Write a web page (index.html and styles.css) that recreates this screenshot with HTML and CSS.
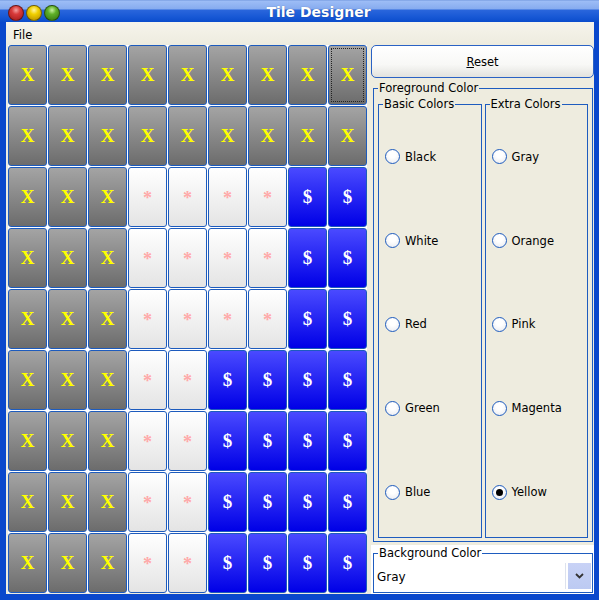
FILE: index.html
```html
<!DOCTYPE html>
<html>
<head>
<meta charset="utf-8">
<title>Tile Designer</title>
<link rel="stylesheet" href="styles.css">
</head>
<body>
<div class="window">
  <div class="titlebar">
    <div class="lights">
      <span class="light red"></span>
      <span class="light yellow"></span>
      <span class="light green"></span>
    </div>
    <div class="title">Tile Designer</div>
  </div>
  <div class="frame">
    <div class="menubar"><span class="menu">File</span></div>
    <div class="content">
      <div class="grid">
        <div class="tile g">X</div><div class="tile g">X</div><div class="tile g">X</div><div class="tile g">X</div><div class="tile g">X</div><div class="tile g">X</div><div class="tile g">X</div><div class="tile g">X</div><div class="tile g focus">X</div>
        <div class="tile g">X</div><div class="tile g">X</div><div class="tile g">X</div><div class="tile g">X</div><div class="tile g">X</div><div class="tile g">X</div><div class="tile g">X</div><div class="tile g">X</div><div class="tile g">X</div>
        <div class="tile g">X</div><div class="tile g">X</div><div class="tile g">X</div><div class="tile w">*</div><div class="tile w">*</div><div class="tile w">*</div><div class="tile w">*</div><div class="tile b">$</div><div class="tile b">$</div>
        <div class="tile g">X</div><div class="tile g">X</div><div class="tile g">X</div><div class="tile w">*</div><div class="tile w">*</div><div class="tile w">*</div><div class="tile w">*</div><div class="tile b">$</div><div class="tile b">$</div>
        <div class="tile g">X</div><div class="tile g">X</div><div class="tile g">X</div><div class="tile w">*</div><div class="tile w">*</div><div class="tile w">*</div><div class="tile w">*</div><div class="tile b">$</div><div class="tile b">$</div>
        <div class="tile g">X</div><div class="tile g">X</div><div class="tile g">X</div><div class="tile w">*</div><div class="tile w">*</div><div class="tile b">$</div><div class="tile b">$</div><div class="tile b">$</div><div class="tile b">$</div>
        <div class="tile g">X</div><div class="tile g">X</div><div class="tile g">X</div><div class="tile w">*</div><div class="tile w">*</div><div class="tile b">$</div><div class="tile b">$</div><div class="tile b">$</div><div class="tile b">$</div>
        <div class="tile g">X</div><div class="tile g">X</div><div class="tile g">X</div><div class="tile w">*</div><div class="tile w">*</div><div class="tile b">$</div><div class="tile b">$</div><div class="tile b">$</div><div class="tile b">$</div>
        <div class="tile g">X</div><div class="tile g">X</div><div class="tile g">X</div><div class="tile w">*</div><div class="tile w">*</div><div class="tile b">$</div><div class="tile b">$</div><div class="tile b">$</div><div class="tile b">$</div>
      </div>
      <div class="panel">
        <div class="reset"><span><u>R</u>eset</span></div>
        <fieldset class="box fg">
          <legend>Foreground Color</legend>
          <div class="subs">
            <fieldset class="box sub">
              <legend>Basic Colors</legend>
              <div class="radios">
                <div class="radio"><span class="circle"></span><span>Black</span></div>
                <div class="radio"><span class="circle"></span><span>White</span></div>
                <div class="radio"><span class="circle"></span><span>Red</span></div>
                <div class="radio"><span class="circle"></span><span>Green</span></div>
                <div class="radio"><span class="circle"></span><span>Blue</span></div>
              </div>
            </fieldset>
            <fieldset class="box sub">
              <legend>Extra Colors</legend>
              <div class="radios">
                <div class="radio"><span class="circle"></span><span>Gray</span></div>
                <div class="radio"><span class="circle"></span><span>Orange</span></div>
                <div class="radio"><span class="circle"></span><span>Pink</span></div>
                <div class="radio"><span class="circle"></span><span>Magenta</span></div>
                <div class="radio"><span class="circle checked"></span><span>Yellow</span></div>
              </div>
            </fieldset>
          </div>
        </fieldset>
        <div class="bgwrap">
          <fieldset class="box bgbox">
            <legend>Background Color</legend>
            <div class="combo">
              <span class="value">Gray</span>
              <span class="arrow"><svg width="9" height="6" viewBox="0 0 9 6"><path d="M1 1 L4.5 4.5 L8 1" fill="none" stroke="#333" stroke-width="1.8"/></svg></span>
            </div>
          </fieldset>
        </div>
      </div>
    </div>
  </div>
</div>
</body>
</html>
```

FILE: styles.css
```css
html, body {
  margin: 0;
  padding: 0;
}
body {
  font-family: "DejaVu Sans", sans-serif;
  font-size: 11px;
  color: #000;
}
.window {
  width: 599px;
  height: 600px;
  background: #0a48cc;
  display: flex;
  flex-direction: column;
  overflow: hidden;
}
.titlebar {
  height: 22px;
  flex: none;
  display: flex;
  align-items: center;
  background: linear-gradient(to bottom, #6f95dc 0px, #9dbdf6 1px, #86abef 9px, #2a66dc 10px, #1a5ad6 16px, #0b4ccc 22px);
}
.lights {
  display: flex;
  gap: 2px;
  padding-left: 8px;
  padding-top: 4px;
  width: 60px;
}
.light {
  width: 16px;
  height: 16px;
  border-radius: 50%;
  box-sizing: border-box;
  border: 1px solid rgba(0, 0, 0, 0.45);
}
.red {
  background: radial-gradient(circle at 50% 30%, #f4a0a0 0%, #d83a3a 35%, #a01818 100%);
}
.yellow {
  background: radial-gradient(circle at 50% 30%, #fff4a0 0%, #f0d000 35%, #b08800 100%);
}
.green {
  background: radial-gradient(circle at 50% 30%, #c8f0a0 0%, #60b028 35%, #307010 100%);
}
.title {
  flex: 1;
  text-align: center;
  color: #fff;
  font-weight: bold;
  font-size: 14px;
  padding-right: 30px;
  padding-top: 2px;
  text-shadow: 0 0 1px rgba(0, 0, 0, 0.4);
}
.frame {
  flex: 1;
  display: flex;
  flex-direction: column;
  margin: 0 5px 6px 6px;
  background: #eeecdf;
}
.menubar {
  height: 22px;
  flex: none;
  background: linear-gradient(to bottom, #f6f4ec, #eeecdf);
  display: flex;
  align-items: center;
  box-sizing: border-box;
  padding: 3px 0 0 7px;
  font-size: 11.5px;
}
.content {
  flex: 1;
  display: flex;
  align-items: flex-start;
}
.grid {
  margin: 1px 0 0 2px;
  display: grid;
  grid-template-columns: repeat(9, 39px);
  grid-template-rows: repeat(9, 60px);
  gap: 1px;
  background: #ffffff;
}
.tile {
  box-sizing: border-box;
  border: 1px solid #1d5bbd;
  border-radius: 3px;
  display: flex;
  align-items: center;
  justify-content: center;
  font-family: "Liberation Serif", serif;
  font-weight: bold;
  font-size: 19px;
}
.tile.g {
  background: linear-gradient(to bottom, #a4a4a4, #6c6c6c);
  color: #ffff00;
}
.tile.w {
  background: linear-gradient(to bottom, #ffffff, #e4e4e4);
  color: #ffa8a8;
  font-size: 18px;
  padding-top: 3px;
}
.tile.b {
  background: linear-gradient(to bottom, #4a4aff, #0000e6);
  color: #ffffff;
}
.tile.focus {
  outline: 1px dotted #222;
  outline-offset: -4px;
}
.panel {
  margin-left: 4px;
  width: 223px;
  height: 550px;
  display: flex;
  flex-direction: column;
}
.reset {
  margin-top: 1px;
  height: 33px;
  flex: none;
  box-sizing: border-box;
  border: 1px solid #2a62c4;
  border-radius: 5px;
  background: linear-gradient(to bottom, #ffffff 0%, #f8f8f6 60%, #e2e2de 100%);
  display: flex;
  align-items: center;
  justify-content: center;
  font-size: 11.5px;
  padding-top: 1px;
}
.box {
  margin: 0;
  border: 1px solid #1e5cbf;
  min-width: 0;
}
.box > legend {
  padding: 0 1px;
  font-size: 11.5px;
}
.fg {
  margin: 3px 1px 0 2px;
  padding: 2px 4px 3px 4px;
  flex: 1;
  display: flex;
  flex-direction: column;
  min-height: 0;
}
.subs {
  flex: 1;
  display: flex;
  gap: 3px;
}
.sub {
  flex: 1;
  padding: 4px 4px 3px 4px;
  display: flex;
  flex-direction: column;
}
.radios {
  flex: 1;
  display: flex;
  flex-direction: column;
}
.radio {
  flex: 1;
  display: flex;
  align-items: center;
  gap: 5px;
  padding-left: 2px;
  font-size: 11.5px;
}
.circle {
  width: 15px;
  height: 15px;
  box-sizing: border-box;
  border-radius: 50%;
  border: 1px solid #1e5cbf;
  background: radial-gradient(circle at 50% 35%, #ffffff 30%, #e6e8ee 100%);
  display: flex;
  align-items: center;
  justify-content: center;
}
.circle.checked::after {
  content: "";
  width: 7px;
  height: 7px;
  border-radius: 50%;
  background: #000;
}
.bgwrap {
  margin-top: 3px;
  height: 49px;
  flex: none;
  background: #ffffff;
  padding: 1px 1px 1px 2px;
  box-sizing: border-box;
  display: flex;
}
.bgbox {
  flex: 1;
  padding: 0 1px 2px 4px;
  display: flex;
}
.combo {
  flex: 1;
  display: flex;
  align-items: center;
  justify-content: space-between;
}
.value {
  font-size: 12px;
  margin-left: -1px;
  padding-top: 4px;
}
.arrow {
  width: 25px;
  height: 26px;
  box-sizing: border-box;
  background: linear-gradient(to bottom, #c8d2f6, #bccaf2);
  border-left: 2px solid #fff;
  box-shadow: -1px 0 0 #dde2ee;
  display: flex;
  align-items: center;
  justify-content: center;
  margin-top: 2px;
}
```
